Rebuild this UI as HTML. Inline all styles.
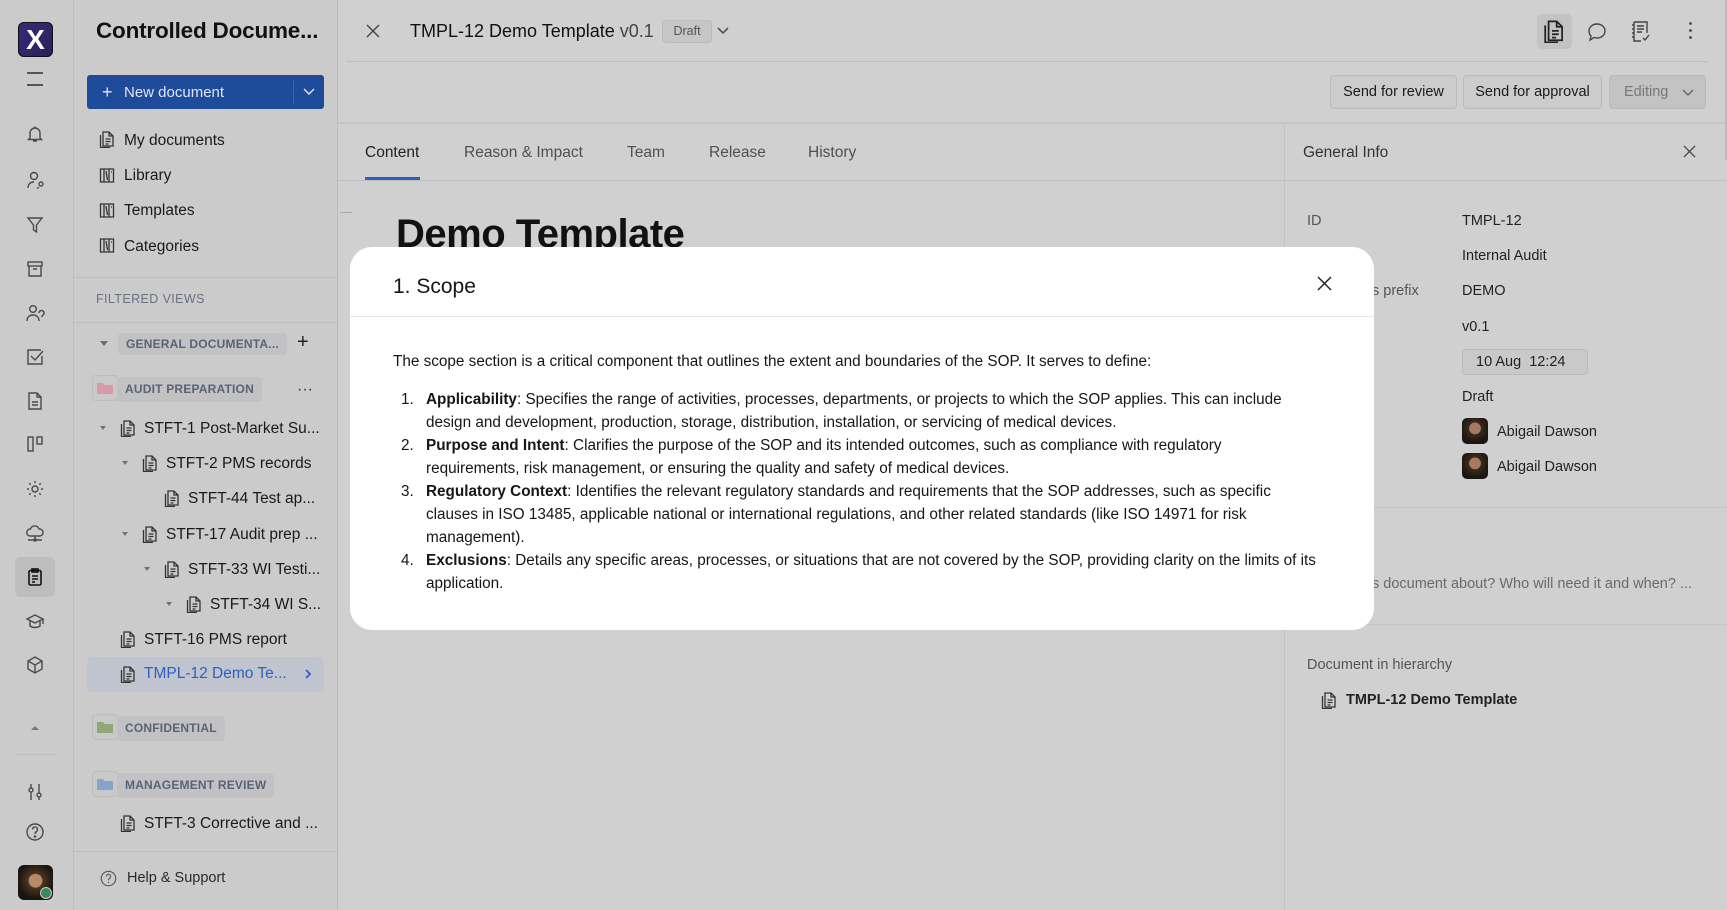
<!DOCTYPE html>
<html><head><meta charset="utf-8"><style>
*{box-sizing:border-box;margin:0;padding:0}
body{width:1727px;height:910px;overflow:hidden;background:#d0d0d0;font-family:"Liberation Sans",sans-serif;color:#141414;position:relative}
.a{position:absolute;white-space:nowrap}
.rail{left:0;top:0;width:74px;height:910px;background:#cbcbcb;border-right:1px solid #bdbdbd}
.side{left:74px;top:0;width:264px;height:910px;background:#cbcbcb;border-right:1px solid #bdbdbd}
.hl{position:absolute;height:1px;background:#bdbdbd}
.ri{position:absolute;left:25px;width:20px;height:20px}
.ri svg{width:20px;height:20px;fill:none;stroke:#4a4a4a;stroke-width:1.4}
.nav{font-size:15.5px;color:#1a1a1a}
.tree{font-size:15.5px;color:#1a1a1a}
.di{width:16px;height:17px}
.chip{background:#c2c2c4;border-radius:4px;font-size:12px;color:#5a6374;letter-spacing:.2px;font-weight:bold;padding:0 8px;height:22px;line-height:22px}
.fold{width:26px;height:26px;border:1px solid #bcbcbc;border-radius:4px;background:#c9c9c9}
.btn{height:34px;border:1px solid #bababa;border-radius:4px;background:#cccccc;font-size:14.5px;line-height:32px;text-align:center;color:#1a1a1a}
.tab{font-size:15.5px;color:#505050;top:144px}
.lab{font-size:14.5px;color:#555;left:1307px}
.val{font-size:14.5px;color:#222;left:1462px}
.modal{left:350px;top:247px;width:1024px;height:383px;background:#fff;border-radius:22px}
.body{font-size:15.3px;line-height:23px;color:#161616}
ol{padding-left:25px}
li{padding-left:8px}
.av{width:26px;height:26px;border-radius:5px;background:radial-gradient(circle at 50% 40%,#a77a5e 0 28%,#3a2a1e 30%,#1c1612 70%)}
</style></head><body>
<div class="a rail"></div>
<div class="a side"></div>
<div class="a" style="left:18px;top:22px;width:35px;height:35px;border-radius:6px;background:linear-gradient(135deg,#3a2a7a,#2a1f5a);box-shadow:inset 0 0 0 1px #111;color:#fff;font-weight:bold;font-size:28px;line-height:35px;text-align:center">X</div>
<div class="a" style="left:27px;top:72px;width:16px;height:1.5px;background:#555"></div>
<div class="a" style="left:27px;top:84px;width:16px;height:1.5px;background:#555"></div>
<div class="ri" style="top:124px"><svg viewBox="0 0 20 20"><path d="M5 14V9a5 5 0 0110 0v5l1.5 1.5h-13z M8 17h4 M10 2.5v1.5"/></svg></div>
<div class="ri" style="top:170px"><svg viewBox="0 0 20 20"><circle cx="9" cy="6" r="3.5"/><path d="M3 18c0-4 2.5-6 6-6 M14 14a2 2 0 104 0 2 2 0 00-4 0 M14 17l-2 1.5"/></svg></div>
<div class="ri" style="top:215px"><svg viewBox="0 0 20 20"><path d="M3 3h14l-5.5 7v7l-3-2v-5z"/></svg></div>
<div class="ri" style="top:259px"><svg viewBox="0 0 20 20"><rect x="3" y="3" width="14" height="4"/><path d="M4 7v10h12V7 M8 10h4"/></svg></div>
<div class="ri" style="top:303px"><svg viewBox="0 0 20 20"><circle cx="8" cy="6" r="3.3"/><path d="M2 18c0-4 2.5-6 6-6s6 2 6 6 M14 10a2.5 2.5 0 114 2l-1.5 2"/></svg></div>
<div class="ri" style="top:347px"><svg viewBox="0 0 20 20"><path d="M16 3H3v14h14V9 M6 9l4 4 8-9"/></svg></div>
<div class="ri" style="top:391px"><svg viewBox="0 0 20 20"><path d="M4 2h8l4 4v12H4z M12 2v4h4 M7 11h6 M7 14h6"/></svg></div>
<div class="ri" style="top:434px"><svg viewBox="0 0 20 20"><rect x="3" y="3" width="5" height="14"/><rect x="12" y="3" width="5" height="7"/></svg></div>
<div class="ri" style="top:479px"><svg viewBox="0 0 20 20"><circle cx="10" cy="10" r="3"/><path d="M10 2v2M10 16v2M2 10h2M16 10h2M4.3 4.3l1.4 1.4M14.3 14.3l1.4 1.4M4.3 15.7l1.4-1.4M14.3 5.7l1.4-1.4"/></svg></div>
<div class="ri" style="top:523px"><svg viewBox="0 0 20 20"><path d="M5 13a3.5 3.5 0 01.5-7A4.5 4.5 0 0114 6a3.5 3.5 0 011 7z M10 13v3 M3 17h14"/><circle cx="10" cy="17" r="1"/></svg></div>
<div class="a" style="left:15px;top:557px;width:40px;height:40px;border-radius:6px;background:#bdbdbd"></div>
<div class="ri" style="top:567px"><svg viewBox="0 0 20 20" style="stroke:#111;stroke-width:1.6"><rect x="4" y="3.5" width="12" height="14.5" rx="1.5"/><rect x="7" y="2" width="6" height="3"/><path d="M7 9h6M7 12h6M7 15h3"/></svg></div>
<div class="ri" style="top:611px"><svg viewBox="0 0 20 20"><path d="M2 8l8-4 8 4-8 4z M5 10v5c3 2 7 2 10 0v-5 M18 8v5"/></svg></div>
<div class="ri" style="top:655px"><svg viewBox="0 0 20 20"><path d="M10 2l7 4v8l-7 4-7-4V6z M3 6l7 4 7-4 M10 10v8"/></svg></div>
<div class="a" style="left:31px;top:722px;border:4px solid transparent;border-bottom:4px solid #777;width:0;height:0"></div>
<div class="hl" style="left:16px;top:754px;width:39px"></div>
<div class="ri" style="top:782px"><svg viewBox="0 0 20 20"><path d="M6 2v16M14 2v16"/><circle cx="6" cy="8" r="2" fill="#cbcbcb"/><circle cx="14" cy="13" r="2" fill="#cbcbcb"/></svg></div>
<div class="ri" style="top:822px"><svg viewBox="0 0 20 20"><circle cx="10" cy="10" r="8"/><path d="M7.5 7.5a2.5 2.5 0 114 2c-1 .7-1.5 1.2-1.5 2.5"/><circle cx="10" cy="14.5" r=".6"/></svg></div>
<div class="a" style="left:18px;top:865px;width:35px;height:35px;border-radius:6px;background:radial-gradient(circle at 50% 45%,#b88a6a 0 25%,#4a3422 28%,#1a1410 70%)"></div>
<div class="a" style="left:40px;top:887px;width:12px;height:12px;border-radius:50%;background:#3a8a5a;border:1.5px solid #cbcbcb"></div>

<div class="a" style="left:96px;top:18px;font-size:22.5px;font-weight:bold;color:#111;letter-spacing:-.2px">Controlled Docume...</div>
<div class="a" style="left:87px;top:75px;width:237px;height:34px;background:#1f4b9b;border-radius:3px"></div>
<div class="a" style="left:102px;top:83px;color:#dfe6f4;font-size:18px;line-height:18px">+</div>
<div class="a" style="left:124px;top:84px;color:#dfe6f4;font-size:15px">New document</div>
<div class="a" style="left:293px;top:81px;width:1px;height:22px;background:#3d63aa"></div>
<svg class="a" style="left:302px;top:86px" width="14" height="10" viewBox="0 0 14 10"><path d="M2 3l5 5 5-5" fill="none" stroke="#dfe6f4" stroke-width="1.4"/></svg>

<svg width="0" height="0" style="position:absolute"><defs>
<symbol id="doc" viewBox="0 0 16 17"><path d="M4 1h6l4 4v10H4z M10 1v4h4 M1.5 4v12.5H11 M6.5 8h5M6.5 10.5h5M6.5 13h3" fill="none" stroke="#333" stroke-width="1.3"/></symbol>
<symbol id="lib" viewBox="0 0 16 17"><path d="M1.5 2h13v13h-13z M5 2v13 M10 2v13 M7 4l1.5 9 M12 5h1" fill="none" stroke="#333" stroke-width="1.3"/></symbol>
</defs></svg>
<svg class="a di" style="left:99px;top:131px"><use href="#doc"/></svg>
<div class="a nav" style="left:124px;top:132px">My documents</div>
<svg class="a di" style="left:99px;top:167px"><use href="#lib"/></svg>
<div class="a nav" style="left:124px;top:167px">Library</div>
<svg class="a di" style="left:99px;top:202px"><use href="#lib"/></svg>
<div class="a nav" style="left:124px;top:202px">Templates</div>
<svg class="a di" style="left:99px;top:237px"><use href="#lib"/></svg>
<div class="a nav" style="left:124px;top:238px">Categories</div>
<div class="hl" style="left:74px;top:277px;width:264px"></div>
<div class="a" style="left:96px;top:292px;font-size:12.5px;color:#6a7180;letter-spacing:.4px">FILTERED VIEWS</div>
<div class="hl" style="left:74px;top:322px;width:264px"></div>

<div class="a" style="left:100px;top:341px;border:4px solid transparent;border-top:5px solid #6a7180"></div>
<div class="a chip" style="left:118px;top:333px">GENERAL DOCUMENTA...</div>
<div class="a" style="left:297px;top:331px;font-size:20px;color:#222">+</div>
<div class="a fold" style="left:92px;top:375px"><svg width="24" height="24" viewBox="0 0 24 24"><path d="M4 7h6l2 2h8v9H4z" fill="#d89aa8"/></svg></div>
<div class="a chip" style="left:117px;top:377px;height:25px;line-height:25px;padding:0 8px">AUDIT PREPARATION</div>
<div class="a" style="left:297px;top:381px;font-size:16px;color:#333">···</div>

<div class="a" style="left:100px;top:426px;border:3.5px solid transparent;border-top:4px solid #6a7180"></div>
<svg class="a di" style="left:120px;top:420px"><use href="#doc"/></svg>
<div class="a tree" style="left:144px;top:420px">STFT-1 Post-Market Su...</div>
<div class="a" style="left:122px;top:461px;border:3.5px solid transparent;border-top:4px solid #6a7180"></div>
<svg class="a di" style="left:142px;top:455px"><use href="#doc"/></svg>
<div class="a tree" style="left:166px;top:455px">STFT-2 PMS records</div>
<svg class="a di" style="left:164px;top:490px"><use href="#doc"/></svg>
<div class="a tree" style="left:188px;top:490px">STFT-44 Test ap...</div>
<div class="a" style="left:122px;top:532px;border:3.5px solid transparent;border-top:4px solid #6a7180"></div>
<svg class="a di" style="left:142px;top:526px"><use href="#doc"/></svg>
<div class="a tree" style="left:166px;top:526px">STFT-17 Audit prep ...</div>
<div class="a" style="left:144px;top:567px;border:3.5px solid transparent;border-top:4px solid #6a7180"></div>
<svg class="a di" style="left:164px;top:561px"><use href="#doc"/></svg>
<div class="a tree" style="left:188px;top:561px">STFT-33 WI Testi...</div>
<div class="a" style="left:166px;top:602px;border:3.5px solid transparent;border-top:4px solid #6a7180"></div>
<svg class="a di" style="left:186px;top:596px"><use href="#doc"/></svg>
<div class="a tree" style="left:210px;top:596px">STFT-34 WI S...</div>
<svg class="a di" style="left:120px;top:631px"><use href="#doc"/></svg>
<div class="a tree" style="left:144px;top:631px">STFT-16 PMS report</div>
<div class="a" style="left:87px;top:657px;width:237px;height:35px;background:#bfc4cf;border-radius:6px"></div>
<svg class="a di" style="left:120px;top:666px"><use href="#doc"/></svg>
<div class="a tree" style="left:144px;top:665px;color:#2d5fc4">TMPL-12 Demo Te...</div>
<svg class="a" style="left:303px;top:668px" width="10" height="12" viewBox="0 0 10 12"><path d="M3 2l4 4-4 4" fill="none" stroke="#2d5fc4" stroke-width="1.8"/></svg>

<div class="a fold" style="left:92px;top:714px"><svg width="24" height="24" viewBox="0 0 24 24"><path d="M4 7h6l2 2h8v9H4z" fill="#8fa878"/></svg></div>
<div class="a chip" style="left:117px;top:716px;height:25px;line-height:25px">CONFIDENTIAL</div>
<div class="a fold" style="left:92px;top:771px"><svg width="24" height="24" viewBox="0 0 24 24"><path d="M4 7h6l2 2h8v9H4z" fill="#86a4c8"/></svg></div>
<div class="a chip" style="left:117px;top:773px;height:25px;line-height:25px">MANAGEMENT REVIEW</div>
<svg class="a di" style="left:120px;top:815px"><use href="#doc"/></svg>
<div class="a tree" style="left:144px;top:815px">STFT-3 Corrective and ...</div>
<div class="hl" style="left:74px;top:851px;width:264px"></div>
<svg class="a" style="left:100px;top:870px" width="17" height="17" viewBox="0 0 20 20"><circle cx="10" cy="10" r="8.5" fill="none" stroke="#555" stroke-width="1.3"/><path d="M7.5 7.5a2.5 2.5 0 114 2c-1 .7-1.5 1.2-1.5 2.5" fill="none" stroke="#555" stroke-width="1.3"/><circle cx="10" cy="14.5" r=".8" fill="#555"/></svg>
<div class="a" style="left:127px;top:870px;font-size:14.5px;color:#2a2a2a">Help &amp; Support</div>

<svg class="a" style="left:365px;top:23px" width="16" height="16" viewBox="0 0 16 16"><path d="M2 2l12 12M14 2L2 14" stroke="#444" stroke-width="1.4"/></svg>
<div class="a" style="left:410px;top:21px;font-size:18px;color:#111">TMPL-12 Demo Template <span style="color:#444">v0.1</span></div>
<div class="a" style="left:662px;top:20px;width:50px;height:23px;border:1px solid #bbb;border-radius:4px;background:#c6c6c6;font-size:12.5px;color:#555;text-align:center;line-height:21px">Draft</div>
<svg class="a" style="left:716px;top:25px" width="14" height="12" viewBox="0 0 14 12"><path d="M2 3l5 5 5-5" fill="none" stroke="#555" stroke-width="1.6"/></svg>
<div class="a" style="left:1537px;top:14px;width:35px;height:35px;border-radius:5px;background:#c3c3c3"></div>
<svg class="a" style="left:1543px;top:20px" width="22" height="23" viewBox="0 0 16 17"><path d="M4 1h6l4 4v10H4z M10 1v4h4 M1.5 4v12.5H11 M6.5 8h5M6.5 10.5h5M6.5 13h3" fill="none" stroke="#222" stroke-width="1.3"/></svg>
<svg class="a" style="left:1586px;top:21px" width="22" height="22" viewBox="0 0 22 22"><path d="M11 3c4.5 0 8 3 8 7s-3.5 7-8 7c-1 0-2-.2-3-.5L4 19l1-4c-1.3-1.3-2-3-2-5 0-4 3.5-7 8-7z" fill="none" stroke="#444" stroke-width="1.4"/></svg>
<svg class="a" style="left:1630px;top:20px" width="22" height="24" viewBox="0 0 22 24"><path d="M4 2h13v11 M4 2v19h7 M7 6h7M7 9h7M7 12h5 M2 5h2M2 9h2M2 13h2M2 17h2 M13 18l2 2 4-5" fill="none" stroke="#444" stroke-width="1.4"/></svg>
<div class="a" style="left:1689px;top:20px;width:3px;height:20px;background:radial-gradient(circle,#555 1.3px,transparent 1.6px) 0 0/3px 7px"></div>
<div class="hl" style="left:346px;top:61px;width:1362px"></div>

<div class="a btn" style="left:1330px;top:75px;width:127px">Send for review</div>
<div class="a btn" style="left:1463px;top:75px;width:139px">Send for approval</div>
<div class="a btn" style="left:1609px;top:75px;width:97px;background:#c3c3c3;color:#777;text-align:left;padding-left:14px">Editing
<svg style="position:absolute;left:72px;top:11px" width="12" height="10" viewBox="0 0 12 10"><path d="M1 3l5 5 5-5" fill="none" stroke="#666" stroke-width="1.4"/></svg></div>
<div class="hl" style="left:338px;top:122px;width:1389px;height:2px;background:#c4c4c4"></div>

<div class="a tab" style="left:365px;color:#222">Content</div>
<div class="a" style="left:365px;top:177px;width:55px;height:3px;background:#2c5fbf"></div>
<div class="a tab" style="left:464px">Reason &amp; Impact</div>
<div class="a tab" style="left:627px">Team</div>
<div class="a tab" style="left:709px">Release</div>
<div class="a tab" style="left:808px">History</div>
<div class="hl" style="left:338px;top:180px;width:946px"></div>
<div class="a" style="left:1284px;top:123px;width:1px;height:787px;background:#c2c2c2"></div>
<div class="hl" style="left:1284px;top:180px;width:443px"></div>
<div class="a" style="left:1303px;top:144px;font-size:15.5px;color:#333">General Info</div>
<svg class="a" style="left:1683px;top:145px" width="13" height="13" viewBox="0 0 14 14"><path d="M1 1l12 12M13 1L1 13" stroke="#444" stroke-width="1.4"/></svg>
<div class="a" style="left:340px;top:212px;width:12px;height:1px;background:#aaa"></div>

<div class="a" style="left:396px;top:212px;font-size:40px;font-weight:bold;color:#111;letter-spacing:-.5px">Demo Template</div>

<div class="a lab" style="top:213px">ID</div><div class="a val" style="top:213px">TMPL-12</div>
<div class="a val" style="top:248px">Internal Audit</div>
<div class="a lab" style="top:283px;left:1372px">s prefix</div><div class="a val" style="top:283px">DEMO</div>
<div class="a val" style="top:319px">v0.1</div>
<div class="a" style="left:1462px;top:349px;width:126px;height:26px;border:1px solid #bbb;border-radius:4px;background:#c9c9c9;font-size:14.5px;line-height:24px;padding-left:13px;color:#222">10 Aug&nbsp; 12:24</div>
<div class="a val" style="top:389px">Draft</div>
<div class="a av" style="left:1462px;top:418px"></div>
<div class="a val" style="top:424px;left:1497px">Abigail Dawson</div>
<div class="a av" style="left:1462px;top:453px"></div>
<div class="a val" style="top:459px;left:1497px">Abigail Dawson</div>
<div class="hl" style="left:1284px;top:507px;width:443px;background:#c4c4c4"></div>
<div class="a" style="left:1372px;top:576px;font-size:14.5px;color:#6a6a6a">s document about? Who will need it and when? ...</div>
<div class="hl" style="left:1284px;top:624px;width:443px;background:#c4c4c4"></div>
<div class="a" style="left:1307px;top:657px;font-size:14.5px;color:#555">Document in hierarchy</div>
<svg class="a di" style="left:1321px;top:692px"><use href="#doc"/></svg>
<div class="a" style="left:1346px;top:692px;font-size:14.5px;color:#222;font-weight:bold">TMPL-12 Demo Template</div>
<div class="a" style="left:1725px;top:0;width:2px;height:160px;background:#bbb"></div>

<div class="a modal">
  <div class="a" style="left:43px;top:28px;font-size:21px;color:#161616">1. Scope</div>
  <svg class="a" style="left:967px;top:29px" width="15" height="15" viewBox="0 0 15 15"><path d="M1 1l13 13M14 1L1 14" stroke="#222" stroke-width="1.5"/></svg>
  <div class="a" style="left:0;top:69px;width:1024px;height:1px;background:#e5e5e5"></div>
  <div class="a body" style="left:43px;top:103px;width:945px;white-space:normal">
    <p style="margin-bottom:15px">The scope section is a critical component that outlines the extent and boundaries of the SOP. It serves to define:</p>
    <ol>
      <li><b>Applicability</b>: Specifies the range of activities, processes, departments, or projects to which the SOP applies. This can include<br>design and development, production, storage, distribution, installation, or servicing of medical devices.</li>
      <li><b>Purpose and Intent</b>: Clarifies the purpose of the SOP and its intended outcomes, such as compliance with regulatory<br>requirements, risk management, or ensuring the quality and safety of medical devices.</li>
      <li><b>Regulatory Context</b>: Identifies the relevant regulatory standards and requirements that the SOP addresses, such as specific<br>clauses in ISO 13485, applicable national or international regulations, and other related standards (like ISO 14971 for risk<br>management).</li>
      <li><b>Exclusions</b>: Details any specific areas, processes, or situations that are not covered by the SOP, providing clarity on the limits of its<br>application.</li>
    </ol>
  </div>
</div>
</body></html>
